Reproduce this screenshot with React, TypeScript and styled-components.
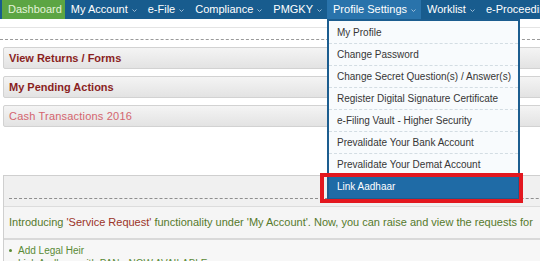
import React from "react";
import styled, { createGlobalStyle } from "styled-components";

const Global = createGlobalStyle`
  html, body { margin: 0; padding: 0; background: #fff; }
  body { font-family: "Liberation Sans", Arial, sans-serif; }
  #root { width: 540px; height: 261px; overflow: hidden; position: relative; }
`;

const Page = styled.div`
  position: relative;
  width: 540px;
  height: 261px;
  overflow: hidden;
  background: #fff;
`;

const NavBar = styled.nav`
  display: flex;
  align-items: stretch;
  height: 19px;
  padding-left: 2px;
  background: #185c8e;
  white-space: nowrap;
`;

const NavItem = styled.div<{ $variant?: "home" | "active" }>`
  display: flex;
  align-items: center;
  padding: 0 ${(p) => (p.$variant === "home" ? "3px" : "5px")} 2px 6px;
  font-size: 11px;
  color: ${(p) => (p.$variant === "home" ? "#e3f3d9" : "#fff")};
  background: ${(p) =>
    p.$variant === "home" ? "#5ca543" : p.$variant === "active" ? "#2973ab" : "transparent"};
`;

const Caret = styled.svg`
  width: 5px;
  height: 3px;
  margin-left: 4px;
  margin-top: 4px;
`;

const TopRule = styled.div`
  margin-top: 8px;
  height: 1px;
  background: #e4e4e4;
`;

const DashedRule = styled.div`
  margin-top: 11px;
  border-top: 1px dashed #9a9a9a;
`;

const PanelList = styled.div`
  display: flex;
  flex-direction: column;
  gap: 7px;
  margin: 7px 0 0 3px;
  width: 620px;
`;

const Panel = styled.div<{ $light?: boolean }>`
  box-sizing: border-box;
  height: 22px;
  line-height: 20px;
  padding-left: 5px;
  border: 1px solid #d2d2d2;
  border-radius: 2px;
  background: linear-gradient(#f4f4f4, #e3e3e3);
  font-size: 11px;
  font-weight: ${(p) => (p.$light ? 400 : 700)};
  letter-spacing: ${(p) => (p.$light ? "0.2px" : "0")};
  color: ${(p) => (p.$light ? "#d4646e" : "#8a1f1f")};
`;

const BigBox = styled.div`
  margin: 48px 0 0 3px;
  width: 620px;
  border: 1px solid #cfcfcf;
  background: #f0f0f0;
`;

const BoxHeader = styled.div`
  padding: 0 0 7px 5px;
  border-bottom: 1px solid #dcdcdc;
`;

const BoxHeaderLine = styled.div`
  height: 22px;
  border-bottom: 1px dashed #8f8f8f;
`;

const Message = styled.div`
  height: 31px;
  line-height: 30px;
  padding-left: 5px;
  background: #f5f5f5;
  border-bottom: 2px solid #d9d9d9;
  font-size: 11px;
  color: #557a2c;
  white-space: nowrap;
`;

const Red = styled.span`
  color: #9b3328;
`;

const List = styled.ul`
  margin: 0;
  padding: 4px 0 0 5px;
  list-style: none;
  background: #f7f7f7;
`;

const ListItem = styled.li`
  display: flex;
  align-items: center;
  gap: 6px;
  height: 13px;
  font-size: 10px;
  color: #5a8a36;
  white-space: nowrap;
  &::before {
    content: "";
    width: 3px;
    height: 3px;
    border-radius: 50%;
    background: #5a8a36;
  }
`;

const Menu = styled.ul`
  position: absolute;
  left: 327px;
  top: 19px;
  width: 193px;
  box-sizing: border-box;
  margin: 0;
  padding: 1px 0 0;
  list-style: none;
  border: 2px solid #1c5d8f;
  background: #f8fbfd;
`;

const MenuItem = styled.li<{ $active?: boolean }>`
  box-sizing: border-box;
  height: 22px;
  line-height: 22px;
  padding-left: 8px;
  font-size: 10px;
  white-space: nowrap;
  color: ${(p) => (p.$active ? "#fff" : "#363636")};
  background: ${(p) => (p.$active ? "#1f6ba6" : "transparent")};
  border-bottom: ${(p) => (p.$active ? "none" : "1px dashed #d3dde3")};
`;

const Annotation = styled.div`
  position: absolute;
  left: 320px;
  top: 173px;
  width: 203px;
  height: 30px;
  box-sizing: border-box;
  border: 4px solid #e3171f;
  pointer-events: none;
`;

const CaretIcon = () => (
  <Caret viewBox="0 0 5 3">
    <polyline points="0.5,0.5 2.5,2.5 4.5,0.5" fill="none" stroke="#9dbcd6" strokeWidth="1" />
  </Caret>
);

const navItems: { label: string; caret: boolean; variant?: "home" | "active" }[] = [
  { label: "Dashboard", caret: false, variant: "home" },
  { label: "My Account", caret: true },
  { label: "e-File", caret: true },
  { label: "Compliance", caret: true },
  { label: "PMGKY", caret: true },
  { label: "Profile Settings", caret: true, variant: "active" },
  { label: "Worklist", caret: true },
  { label: "e-Proceedings", caret: true },
];

const menuItems = [
  "My Profile",
  "Change Password",
  "Change Secret Question(s) / Answer(s)",
  "Register Digital Signature Certificate",
  "e-Filing Vault - Higher Security",
  "Prevalidate Your Bank Account",
  "Prevalidate Your Demat Account",
  "Link Aadhaar",
];

export default function App() {
  return (
    <Page>
      <Global />
      <NavBar>
        {navItems.map((n) => (
          <NavItem key={n.label} $variant={n.variant}>
            {n.label}
            {n.caret && <CaretIcon />}
          </NavItem>
        ))}
      </NavBar>
      <TopRule />
      <DashedRule />
      <PanelList>
        <Panel>View Returns / Forms</Panel>
        <Panel>My Pending Actions</Panel>
        <Panel $light>Cash Transactions 2016</Panel>
      </PanelList>
      <BigBox>
        <BoxHeader>
          <BoxHeaderLine />
        </BoxHeader>
        <Message>
          Introducing <Red>'Service Request'</Red> functionality under 'My Account'. Now, you can
          raise and view the requests for
        </Message>
        <List>
          <ListItem>Add Legal Heir</ListItem>
          <ListItem>Link Aadhaar with PAN - NOW AVAILABLE</ListItem>
        </List>
      </BigBox>
      <Menu>
        {menuItems.map((m, i) => (
          <MenuItem key={m} $active={i === menuItems.length - 1}>
            {m}
          </MenuItem>
        ))}
      </Menu>
      <Annotation />
    </Page>
  );
}
